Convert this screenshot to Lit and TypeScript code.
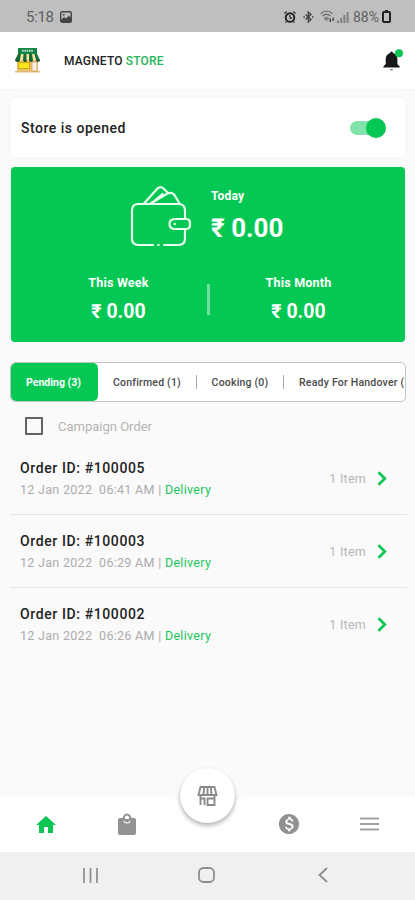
import { LitElement, html, css } from "lit";
import { customElement } from "lit/decorators.js";

@customElement("app-root")
export class AppRoot extends LitElement {
  static styles = css`
    :host { display: flex; flex-direction: column; width: 415px; height: 900px; overflow: hidden;
      background: #fafafa; font-family: Roboto, "Noto Sans", sans-serif; color: #222; }
    * { box-sizing: border-box; }
    svg { display: block; flex: none; overflow: visible; }
    .status { height: 32px; flex: none; background: #bfbfbf; display: flex; align-items: center; padding: 1px 24px 0 26px; color: #606060; }
    .clock { font-size: 15px; width: 34px; letter-spacing: -0.3px; }
    .tray { margin-left: auto; display: flex; align-items: center; }
    .bt { margin-left: 7px; } .wifi { margin-left: 6px; } .signal { margin-left: 2px; }
    .pct { font-size: 14px; margin-left: 4px; width: 29px; letter-spacing: 0; }
    .head { height: 57px; flex: none; background: #fff; display: flex; align-items: center; padding: 0 11px 0 14px; box-shadow: 0 1px 2px #00000005; }
    .brand { margin-left: 23px; font-size: 12px; font-weight: 500; line-height: 16px; letter-spacing: .17px; }
    .green { color: #22c55d; }
    .brand .green { color: #27b557; }
    .bell { margin-left: auto; }
    .open { margin: 9px 10px 0 11px; height: 59px; flex: none; background: #fff; border-radius: 4px; box-shadow: 0 0 5px #00000009;
      display: flex; align-items: center; padding: 0 19px 0 10px; font-size: 14px; font-weight: 500; letter-spacing: .5px; }
    .toggle { margin-left: auto; }
    .wallet { margin: 10px 10px 0 11px; height: 175px; flex: none; background: #04c853; border-radius: 4px; color: #fff; padding-top: 18px; }
    .today { display: flex; padding-left: 119px; height: 72px; }
    .amount { margin-left: 20px; padding-top: 4px; }
    .label { font-size: 12px; line-height: 14px; font-weight: 700; letter-spacing: .2px; }
    .big { font-size: 26px; line-height: 30px; margin-top: 10px; font-weight: 700; white-space: nowrap; }
    .stats { display: flex; height: 60px; margin-top: 11px; padding: 0 18px 0 19px; }
    .stat { flex: 1; text-align: center; padding-top: 8px; }
    .mid { font-size: 19.5px; line-height: 24px; font-weight: 700; margin-top: 10px; }
    .stat .label { font-size: 12.5px; }
    .bar { width: 3px; height: 31px; margin: 16px 0 0; background: #73df9d; }
    .tabs { margin: 20px 9px 0 10px; height: 40px; flex: none; border: 1px solid #c4c4c4; border-radius: 5px; background: #fff;
      display: flex; overflow: hidden; align-items: center; font-size: 10.5px; font-weight: 500; white-space: nowrap; }
    .on { width: 87px; height: 38px; flex: none; display: grid; place-items: center; border-radius: 5px; background: #04c853; color: #fff; font-weight: 700; padding-right: 2px; }
    .tab { flex: none; text-align: center; color: #4a4a4a; letter-spacing: .2px; }
    .w1 { width: 98px; } .w2 { width: 86px; }
    .w3 { padding-left: 15px; letter-spacing: .22px; }
    .sep { width: 1px; height: 14px; background: #aaa; flex: none; }
    .campaign { display: flex; align-items: center; height: 40px; flex: none; padding: 8px 0 0 25px; color: #b4b4b4; font-size: 13px; letter-spacing: 0; }
    .box { width: 18px; height: 18px; border: 2px solid #626262; border-radius: 1px; margin-right: 15px; }
    .order { height: 73px; flex: none; margin: 0 8px 0 10px; padding: 17px 20px 0 10px; border-bottom: 1px solid #e3e3e3; display: flex; }
    .order.last { border-color: transparent; }
    .id { font-size: 14px; line-height: 18px; font-weight: 500; color: #222; letter-spacing: .61px; }
    .meta { font-size: 12.5px; line-height: 16px; margin-top: 5px; color: #acacac; white-space: pre; letter-spacing: .3px; }
    .right { margin-left: auto; display: flex; align-items: center; height: 39px; font-size: 12.5px; color: #b6b6b6; letter-spacing: .25px; }
    .right svg { margin-left: 11px; }
    .grow { flex: 1; }
    .nav { height: 56px; flex: none; background: #fff; position: relative; display: flex; justify-content: space-around; align-items: center; padding-left: 5px; padding-right: 5px; }
    .slot { width: 81px; display: grid; place-items: center; }
    .fab { position: absolute; left: 180px; top: -28px; width: 55px; height: 55px; border-radius: 50%; background: #fff; display: grid; place-items: center; box-shadow: 0 3px 4px #00000045, 0 0 3px #0000000d; }
    .notch { position: absolute; left: 165px; top: -1px; }
    .system { height: 48px; flex: none; background: #f0f0f0; display: flex; align-items: center; padding: 0 87px 2px 83px; }
    .home { margin-left: 100px; } .back { margin-left: auto; }
  `;

  private order(id: string, time: string, last = false) {
    return html`<div class="order ${last ? "last" : ""}">
      <div><div class="id">Order ID: #${id}</div>
        <div class="meta">12 Jan 2022  ${time} AM | <span class="green">Delivery</span></div></div>
      <div class="right">1 Item
        <svg width="10" height="15" viewBox="0 0 10 15" fill="none" stroke="#12c557" stroke-width="2.8"><path d="M1.5 1.2 7.8 7.5 1.5 13.8"/></svg>
      </div></div>`;
  }

  render() {
    return html`
    <div class="status"><span class="clock">5:18</span>
      <svg width="12" height="12" viewBox="0 0 12 12"><rect x=".7" y=".7" width="10.6" height="10.6" rx="1.5" fill="none" stroke="#444" stroke-width="1.4"/><path d="M1 9 4 6l2 1.5L9 4.5l2.3 3V11H1z" fill="#444"/><circle cx="3.7" cy="3.7" r=".9" fill="#444"/></svg>
      <div class="tray">
        <svg width="12" height="12" viewBox="0 0 12 12"><circle cx="6" cy="6.5" r="4.3" fill="none" stroke="#222" stroke-width="1.9"/><path d="M.4 2.6 2.7.6M11.6 2.6 9.3.6M2.5 10.3l-1 1.3M9.5 10.3l1 1.3M6 4v3h2" fill="none" stroke="#333" stroke-width="1.3"/></svg>
        <svg class="bt" width="11" height="12" viewBox="0 0 11 12" fill="none" stroke="#444" stroke-width="1.4"><path d="M2.5 3.4 8 8.5 5.3 11V1L8 3.5 2.5 8.6"/><path d="M.4 6h1.5M9 6h1.5"/></svg>
        <svg class="wifi" width="15" height="13" viewBox="0 0 15 13" fill="none" stroke="#777" stroke-width="1.4"><path d="M.5 3.7C4 .3 9 .3 12.5 3.7M2.5 6C5 3.7 8 3.7 10.5 6M4.7 8.2c1.100-1 2.500-1 3.600 0L6.500 10z"/><path d="M10.300 8.500v3.500M13.200 7.500v3.500" stroke="#444"/></svg>
        <svg class="signal" width="12" height="12" viewBox="0 0 12 12" fill="#808080"><path d="M0 9.5h2V12H0zM3.2 7h2v5h-2zM6.4 4h2v8h-2zM9.6 1h2v11h-2z"/></svg>
        <span class="pct">88%</span>
        <svg width="9" height="13" viewBox="0 0 9 13"><rect x="1" y="2" width="7" height="10" rx="1" fill="none" stroke="#222" stroke-width="2"/><path d="M3 0h3v2H3z" fill="#222"/></svg>
      </div></div>
    <div class="head">
      <svg width="27" height="25" viewBox="0 0 27 25"><path d="M3 11h21v13H3z" fill="#edc16a"/><path d="M1 23h25v1.500H1z" fill="#e3bd7c"/><path d="M4 14h12v7H4z" fill="#d2a51b"/><path d="M5 15h10v5H5z" fill="#f5e71c"/><path d="M18 14h5v9h-5z" fill="#f8eee5" stroke="#c89865" stroke-width=".7"/><path d="M4 0h19v6H4z" fill="#148346"/><path d="M8 2.700h11" stroke="#b2dcbc" stroke-width="2" stroke-dasharray="1.700 .6"/><path d="M4 6h19l3 6H1z" fill="#f9e6a0"/><path d="M4 6h3l-1 6H1zM9.500 6h3v6H9zM15 6h3l1 6h-4zM20.500 6H23l3 6h-4z" fill="#176b39"/><path d="M1 12a2.500 2 0 0 0 5 0zM9 12a2 2 0 0 0 4 0zM15 12a2 2 0 0 0 4 0zM22 12a2 2 0 0 0 4 0z" fill="#194d2d"/></svg>
      <span class="brand">MAGNETO <span class="green">STORE</span></span>
      <svg class="bell" width="21" height="23" viewBox="0 0 21 23"><path d="M8.500 2.500C9.800 2.500 10 4 10 4c3.100 1 4.400 3.300 4.400 6v5.300l2.300 2.200v1H.4v-1L2.700 15v-5c0-2.700 1.500-5 4.400-6 0 0 .2-1.500 1.400-1.500z" fill="#171717"/><path d="M7 20h3a1.500 1.500 0 0 1-3 0z" fill="#777"/><circle cx="16" cy="4.300" r="4" fill="#0bc653"/></svg>
    </div>
    <div class="open">Store is opened
      <svg class="toggle" width="36" height="22" viewBox="0 0 36 22"><rect x="0" y="4" width="33" height="14" rx="7" fill="#80e3a8"/><circle cx="26" cy="11.500" r="10" fill="#00000018"/><circle cx="26" cy="11" r="10" fill="#04c853"/></svg>
    </div>
    <div class="wallet">
      <div class="today">
        <svg width="61" height="62" viewBox="0 0 61 62" fill="none" stroke="#e8fff0" stroke-width="2.200" stroke-linecap="round" stroke-linejoin="round"><path d="M23 60H8.500Q2 60 2 53.500V25.500q0-6.500 6.500-6.500h40Q55 19 55 25.500v8M55 45v8.500Q55 60 48.500 60H34"/><path d="M28.300 60h.4"/><path d="M45 34h11q4 0 4 4v2q0 4-4 4H45q-5.500 0-5.500-5T45 34z"/><path d="M44.700 39h.3"/><path d="M14 18.500 27.500 3.500q3-3 6 0l4 4M20.500 18.500 37.500 8.500q4.500-2 7 1.500l5 8.500M23 17l9.500-8"/></svg>
        <div class="amount"><div class="label">Today</div><div class="big">₹ 0.00</div></div>
      </div>
      <div class="stats">
        <div class="stat"><div class="label">This Week</div><div class="mid">₹ 0.00</div></div>
        <div class="bar"></div>
        <div class="stat"><div class="label">This Month</div><div class="mid">₹ 0.00</div></div>
      </div>
    </div>
    <div class="tabs"><div class="on">Pending (3)</div><div class="tab w1">Confirmed (1)</div><i class="sep"></i><div class="tab w2">Cooking (0)</div><i class="sep"></i><div class="tab w3">Ready For Handover (</div></div>
    <div class="campaign"><i class="box"></i>Campaign Order</div>
    ${this.order("100005", "06:41")}${this.order("100003", "06:29")}${this.order("100002", "06:26", true)}
    <div class="grow"></div>
    <div class="nav">
      <div class="slot"><svg width="20" height="17" viewBox="0 0 20 17"><path d="M8 17v-6h4v6h5V9h3L10 0 0 9h3v8z" fill="#0cc653"/></svg></div>
      <div class="slot"><svg width="18" height="22" viewBox="0 0 18 22"><path d="M2 5h14q2 0 2 2v13q0 2-2 2H2q-2 0-2-2V7q0-2 2-2z" fill="#929292"/><path d="M5.500 6a3.500 4.500 0 0 1 7 0" fill="none" stroke="#929292" stroke-width="2"/><path d="M5.500 8q3.500 4 7 0" fill="none" stroke="#e4e4e4" stroke-width="1.500"/><path d="M7 6a2 2.500 0 0 1 4 0z" fill="#fff"/></svg></div>
      <div class="slot"></div>
      <div class="slot"><svg width="22" height="22" viewBox="0 0 24 24"><path fill="#919191" d="M12 1C5.900 1 1 5.900 1 12s4.900 11 11 11 11-4.900 11-11S18.100 1 12 1zm1.600 17.300V20H11v-1.700c-1.700-.4-3.200-1.500-3.300-3.400h2c.1 1.100.8 1.900 2.700 1.900 2 0 2.400-1 2.400-1.600 0-.8-.4-1.600-2.700-2.100-2.500-.6-4.100-1.600-4.100-3.600 0-1.700 1.300-2.800 3.100-3.200V4h2.700v1.800c1.900.5 2.800 1.900 2.900 3.400h-2c-.1-1.100-.6-1.900-2.200-1.900-1.500 0-2.400.7-2.400 1.600 0 .8.700 1.400 2.700 1.900s4.200 1.400 4.200 3.900c0 1.800-1.400 2.900-3.100 3.200z"/></svg></div>
      <div class="slot"><svg width="19" height="14" viewBox="0 0 19 14"><path d="M0 1.500h19M0 7h19M0 12.500h19" stroke="#a2a2a2" stroke-width="2.200"/></svg></div>
      <svg class="notch" width="85" height="26" viewBox="0 0 85 26"><path d="M0 0H85V1C75 1 73 4 70 10 65 20 56 26 42.500 26S20 20 15 10C12 4 10 1 0 1z" fill="#fafafa"/></svg>
      <div class="fab"><svg width="21" height="20" viewBox="0 0 21 20" fill="none" stroke="#8b8b8b" stroke-width="1.900"><path d="M3.500 1h14l2 8H1.500zM7.200 1 6.500 9M10.500 1v8M13.800 1l.7 8M3.500 9v10M3.500 12.500h4V19M10.500 12.500h7V19h-7zM17.500 9v4"/></svg></div>
    </div>
    <div class="system">
      <svg width="15" height="15" viewBox="0 0 15 15"><path d="M1 0v15M7.500 0v15M14 0v15" stroke="#8d8d8d" stroke-width="1.700"/></svg>
      <svg class="home" width="17" height="16" viewBox="0 0 17 16"><rect x="1" y="1" width="15" height="14" rx="4.500" fill="none" stroke="#8d8d8d" stroke-width="1.800"/></svg>
      <svg class="back" width="10" height="16" viewBox="0 0 10 16"><path d="M9 1 1.500 8 9 15" fill="none" stroke="#8d8d8d" stroke-width="1.800"/></svg>
    </div>`;
  }
}
